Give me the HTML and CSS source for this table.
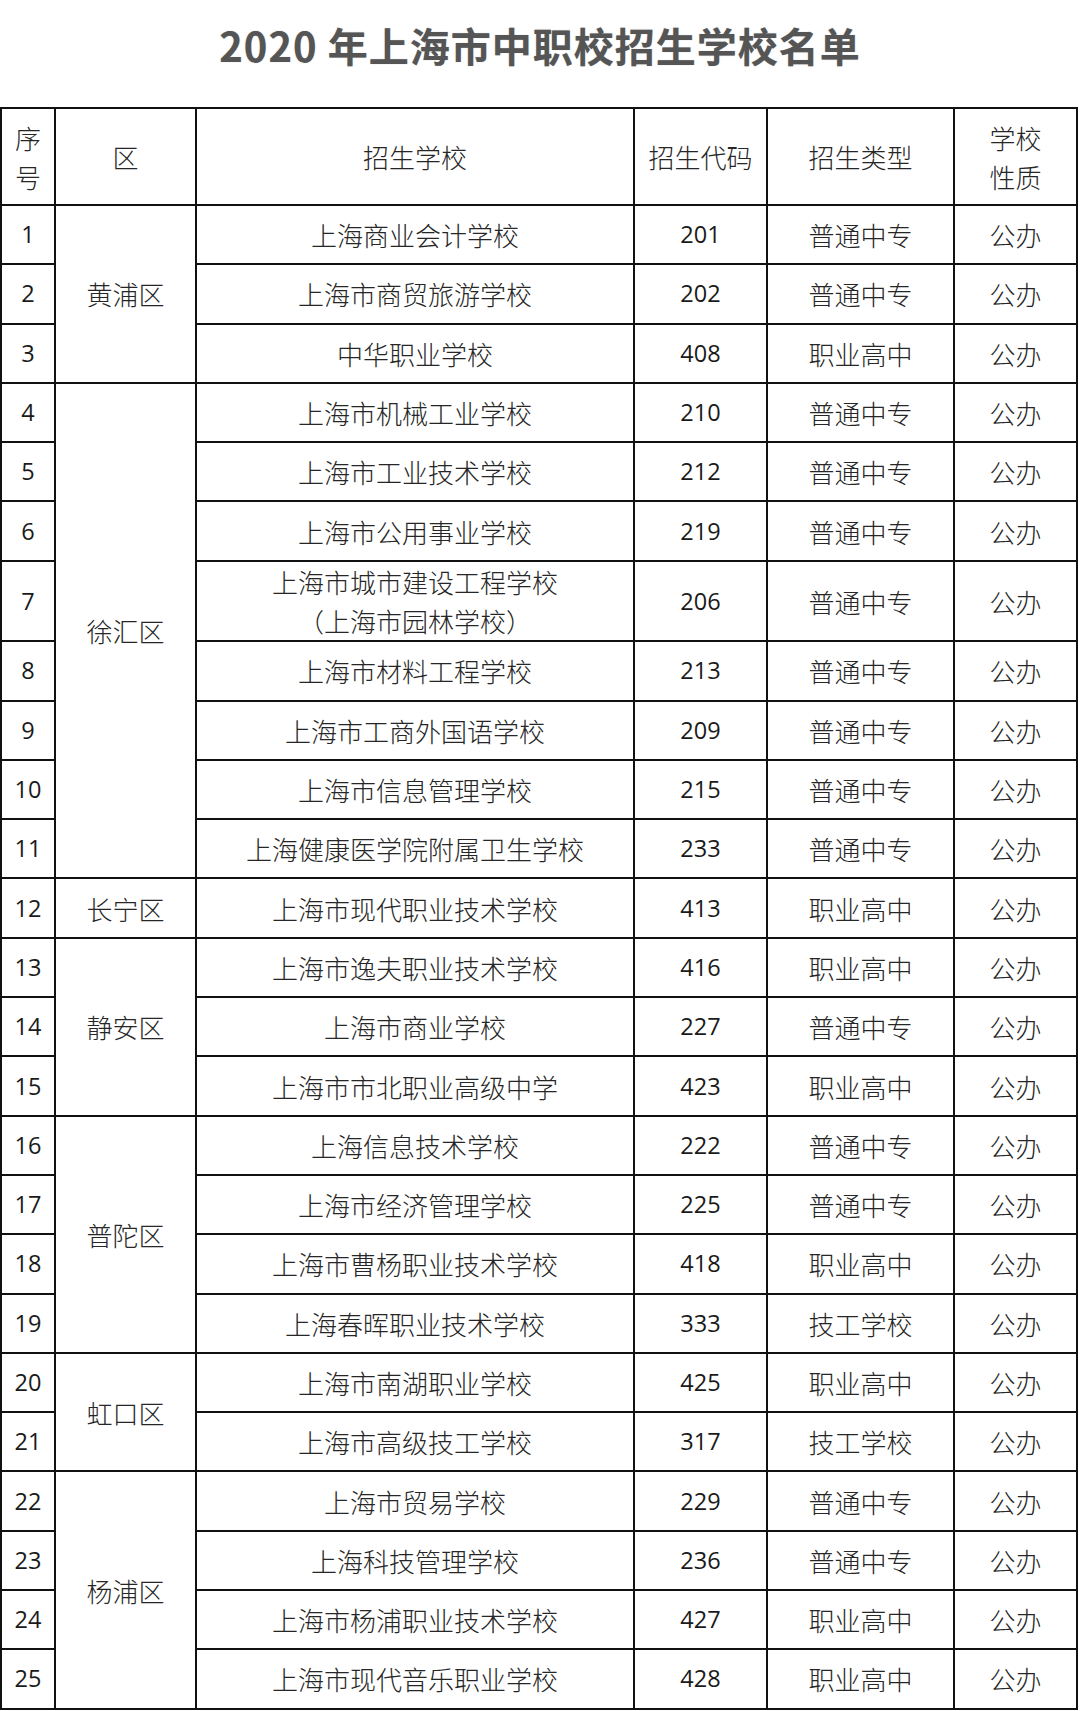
FILE: index.html
```html
<!DOCTYPE html>
<html lang="zh-CN">
<head>
<meta charset="utf-8">
<title>2020年上海市中职校招生学校名单</title>
<link rel="stylesheet" href="styles.css">
</head>
<body>
<h1 class="title">2020 年上海市中职校招生学校名单</h1>
<table class="sheet">
  <colgroup>
    <col class="c-no">
    <col class="c-dist">
    <col class="c-school">
    <col class="c-code">
    <col class="c-type">
    <col class="c-nature">
  </colgroup>
  <thead>
    <tr class="head">
      <th>序<br>号</th>
      <th>区</th>
      <th>招生学校</th>
      <th>招生代码</th>
      <th>招生类型</th>
      <th>学校<br>性质</th>
    </tr>
  </thead>
  <tbody>
    <tr class="row"><td class="num">1</td><td class="dist" rowspan="3">黄浦区</td><td>上海商业会计学校</td><td class="num">201</td><td>普通中专</td><td>公办</td></tr>
    <tr class="row"><td class="num">2</td><td>上海市商贸旅游学校</td><td class="num">202</td><td>普通中专</td><td>公办</td></tr>
    <tr class="row"><td class="num">3</td><td>中华职业学校</td><td class="num">408</td><td>职业高中</td><td>公办</td></tr>
    <tr class="row"><td class="num">4</td><td class="dist" rowspan="8">徐汇区</td><td>上海市机械工业学校</td><td class="num">210</td><td>普通中专</td><td>公办</td></tr>
    <tr class="row"><td class="num">5</td><td>上海市工业技术学校</td><td class="num">212</td><td>普通中专</td><td>公办</td></tr>
    <tr class="row"><td class="num">6</td><td>上海市公用事业学校</td><td class="num">219</td><td>普通中专</td><td>公办</td></tr>
    <tr class="row tall"><td class="num">7</td><td>上海市城市建设工程学校<br>（上海市园林学校）</td><td class="num">206</td><td>普通中专</td><td>公办</td></tr>
    <tr class="row"><td class="num">8</td><td>上海市材料工程学校</td><td class="num">213</td><td>普通中专</td><td>公办</td></tr>
    <tr class="row"><td class="num">9</td><td>上海市工商外国语学校</td><td class="num">209</td><td>普通中专</td><td>公办</td></tr>
    <tr class="row"><td class="num">10</td><td>上海市信息管理学校</td><td class="num">215</td><td>普通中专</td><td>公办</td></tr>
    <tr class="row"><td class="num">11</td><td>上海健康医学院附属卫生学校</td><td class="num">233</td><td>普通中专</td><td>公办</td></tr>
    <tr class="row"><td class="num">12</td><td class="dist">长宁区</td><td>上海市现代职业技术学校</td><td class="num">413</td><td>职业高中</td><td>公办</td></tr>
    <tr class="row"><td class="num">13</td><td class="dist" rowspan="3">静安区</td><td>上海市逸夫职业技术学校</td><td class="num">416</td><td>职业高中</td><td>公办</td></tr>
    <tr class="row"><td class="num">14</td><td>上海市商业学校</td><td class="num">227</td><td>普通中专</td><td>公办</td></tr>
    <tr class="row"><td class="num">15</td><td>上海市市北职业高级中学</td><td class="num">423</td><td>职业高中</td><td>公办</td></tr>
    <tr class="row"><td class="num">16</td><td class="dist" rowspan="4">普陀区</td><td>上海信息技术学校</td><td class="num">222</td><td>普通中专</td><td>公办</td></tr>
    <tr class="row"><td class="num">17</td><td>上海市经济管理学校</td><td class="num">225</td><td>普通中专</td><td>公办</td></tr>
    <tr class="row"><td class="num">18</td><td>上海市曹杨职业技术学校</td><td class="num">418</td><td>职业高中</td><td>公办</td></tr>
    <tr class="row"><td class="num">19</td><td>上海春晖职业技术学校</td><td class="num">333</td><td>技工学校</td><td>公办</td></tr>
    <tr class="row"><td class="num">20</td><td class="dist" rowspan="2">虹口区</td><td>上海市南湖职业学校</td><td class="num">425</td><td>职业高中</td><td>公办</td></tr>
    <tr class="row"><td class="num">21</td><td>上海市高级技工学校</td><td class="num">317</td><td>技工学校</td><td>公办</td></tr>
    <tr class="row"><td class="num">22</td><td class="dist" rowspan="4">杨浦区</td><td>上海市贸易学校</td><td class="num">229</td><td>普通中专</td><td>公办</td></tr>
    <tr class="row"><td class="num">23</td><td>上海科技管理学校</td><td class="num">236</td><td>普通中专</td><td>公办</td></tr>
    <tr class="row"><td class="num">24</td><td>上海市杨浦职业技术学校</td><td class="num">427</td><td>职业高中</td><td>公办</td></tr>
    <tr class="row"><td class="num">25</td><td>上海市现代音乐职业学校</td><td class="num">428</td><td>职业高中</td><td>公办</td></tr>
  </tbody>
</table>
</body>
</html>
```

FILE: styles.css
```css
html, body {
  margin: 0;
  padding: 0;
  background: #ffffff;
}

body {
  font-family: "Noto Sans CJK SC", "Noto Sans", sans-serif;
  color: #2a2a2a;
}

.title {
  margin: 0;
  height: 90px;
  line-height: 90px;
  text-align: center;
  font-size: 40px;
  font-weight: 700;
  color: #555555;
  letter-spacing: 1px;
  text-shadow: 0 0 1px rgba(100, 100, 100, 0.5);
}

.sheet {
  margin-top: 17px;
  width: 1078px;
  table-layout: fixed;
  border-collapse: collapse;
}

.c-no { width: 54px; }
.c-dist { width: 141px; }
.c-school { width: 438px; }
.c-code { width: 133px; }
.c-type { width: 187px; }
.c-nature { width: 123px; }

.sheet th,
.sheet td {
  border: 2px solid #111111;
  padding: 0;
  text-align: center;
  vertical-align: middle;
  font-size: 26px;
  line-height: 39px;
  font-weight: 300;
  color: #262626;
}

.head {
  height: 97px;
}

.row {
  height: 59.3px;
}

.row.tall {
  height: 80.5px;
}

.sheet td.num {
  font-family: "Open Sans", "Liberation Sans", sans-serif;
  font-size: 23.5px;
  font-weight: 400;
  color: #1a1a1a;
}
```
